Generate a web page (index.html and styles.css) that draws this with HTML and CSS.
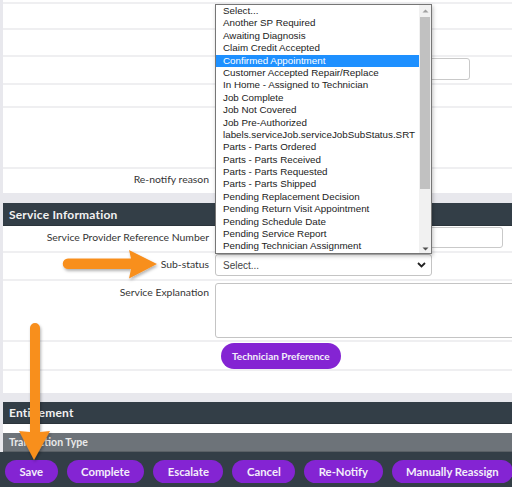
FILE: index.html
```html
<!DOCTYPE html>
<html>
<head>
<meta charset="utf-8">
<link rel="stylesheet" href="styles.css">
</head>
<body>
<div class="page">
  <div class="panel">
    <div class="row h2"></div>
    <div class="row h24"></div>
    <div class="row h25"></div>
    <div class="row h26 form-row">
      <div class="label"></div>
      <div class="field"><div class="text-input top-input"></div></div>
    </div>
    <div class="row h21"></div>
    <div class="row h59"></div>
    <div class="row h24 noline form-row">
      <div class="label renotify">Re-notify reason</div>
      <div class="field"></div>
    </div>
  </div>

  <div class="gap g10"></div>

  <section class="panel">
    <div class="card-header">Service Information</div>
    <div class="row h25 form-row">
      <div class="label">Service Provider Reference Number</div>
      <div class="field"><div class="text-input ref-input"></div></div>
    </div>
    <div class="row h26 form-row">
      <div class="label">Sub-status</div>
      <div class="field">
        <div class="select-box">
          <span>Select...</span>
          <svg class="chev" width="9" height="6" viewBox="0 0 9 6"><path d="M1 1 L4.5 4.5 L8 1" fill="none" stroke="#222" stroke-width="1.8"/></svg>
        </div>
      </div>
    </div>
    <div class="row h59 form-row">
      <div class="label">Service Explanation</div>
      <div class="field"><div class="text-area"></div></div>
    </div>
    <div class="row h27 form-row">
      <div class="label"></div>
      <div class="field"><button class="pill tech">Technician Preference</button></div>
    </div>
    <div class="row h22 noline"></div>
  </section>

  <div class="gap g9"></div>

  <section class="panel">
    <div class="card-header ent">Entitlement</div>
    <div class="white-gap"></div>
    <div class="sub-header">Transaction Type</div>
  </section>

  <div class="action-bar">
    <button class="pill">Save</button>
    <button class="pill">Complete</button>
    <button class="pill">Escalate</button>
    <button class="pill">Cancel</button>
    <button class="pill">Re-Notify</button>
    <button class="pill">Manually Reassign</button>
  </div>

  <div class="dropdown">
    <ul class="options">
      <li>Select...</li>
      <li>Another SP Required</li>
      <li>Awaiting Diagnosis</li>
      <li>Claim Credit Accepted</li>
      <li class="selected">Confirmed Appointment</li>
      <li>Customer Accepted Repair/Replace</li>
      <li>In Home - Assigned to Technician</li>
      <li>Job Complete</li>
      <li>Job Not Covered</li>
      <li>Job Pre-Authorized</li>
      <li>labels.serviceJob.serviceJobSubStatus.SRT</li>
      <li>Parts - Parts Ordered</li>
      <li>Parts - Parts Received</li>
      <li>Parts - Parts Requested</li>
      <li>Parts - Parts Shipped</li>
      <li>Pending Replacement Decision</li>
      <li>Pending Return Visit Appointment</li>
      <li>Pending Schedule Date</li>
      <li>Pending Service Report</li>
      <li>Pending Technician Assignment</li>
    </ul>
    <div class="scrollbar">
      <svg class="sb-arrow" width="11" height="8" viewBox="0 0 11 8"><path d="M2.5 5.5 L5.5 2.5 L8.5 5.5 Z" fill="#a0a0a0"/></svg>
      <div class="sb-track"><div class="sb-thumb"></div></div>
      <svg class="sb-arrow" width="11" height="8" viewBox="0 0 11 8"><path d="M2.5 2.5 L5.5 5.5 L8.5 2.5 Z" fill="#505050"/></svg>
    </div>
  </div>

  <svg class="arrows" width="512" height="487" viewBox="0 0 512 487">
    <defs>
      <filter id="sh" x="-20%" y="-20%" width="140%" height="140%">
        <feDropShadow dx="1" dy="2" stdDeviation="1.5" flood-color="#000" flood-opacity="0.3"/>
      </filter>
    </defs>
    <g fill="#f88f1f" stroke="none" filter="url(#sh)">
      <path d="M68 258.5 L131 258.5 L129 250 L157 264 L129 278.5 L131 269 L68 269 A5.25 5.25 0 0 1 68 258.5 Z"/>
      <path d="M30 328 A5 5 0 0 1 40 328 L40 432 L50 431 L34 460 L19 431 L30 432 Z"/>
    </g>
  </svg>
</div>
</body>
</html>
```
FILE: styles.css
```css
* { box-sizing: border-box; }
html, body { margin: 0; padding: 0; }
body {
  background: #e8e8ed;
  font-family: Lato, "Open Sans", sans-serif;
  color: #3a3a3a;
  width: 512px;
  height: 487px;
  overflow: hidden;
}
.page { position: relative; width: 512px; height: 487px; overflow: hidden; }
.panel { background: #fff; margin-left: 3px; }
.row { border-bottom: 2px solid #efeff1; }
.row.noline { border-bottom: none; }
.h2 { height: 4px; }
.h21 { height: 23px; }
.h22 { height: 22px; }
.h24 { height: 26px; }
.h24.noline { height: 24px; }
.h25 { height: 27px; }
.h26 { height: 28px; }
.h27 { height: 29px; }
.h59 { height: 61px; }
.form-row {
  display: grid;
  grid-template-columns: 206px 1fr;
  column-gap: 6px;
  align-items: start;
}
.label {
  text-align: right;
  font-size: 10.4px;
  line-height: 13px;
  padding-top: 4.5px;
  color: #353535;
  white-space: nowrap;
}
.label.renotify { padding-top: 3.5px; }
.field { min-width: 0; }
.text-input {
  border: 1px solid #c9c9c9;
  border-radius: 3px;
  background: #fff;
  height: 22px;
}
.top-input { width: 255px; margin-top: 1px; }
.ref-input { width: 288px; height: 21px; margin-top: 1px; }
.select-box {
  width: 217px;
  height: 22px;
  margin-top: 1px;
  border: 1px solid #c4c4c4;
  border-radius: 3px;
  display: flex;
  align-items: center;
  justify-content: space-between;
  padding: 0 5px 0 7px;
  font-family: "Liberation Sans", Arial, sans-serif;
  font-size: 10px;
  color: #444;
}
.text-area {
  width: 320px;
  height: 55px;
  margin-top: 2px;
  border: 1px solid #c4c4c4;
  border-radius: 3px;
}
.card-header {
  background: #333e47;
  color: #f2f2f2;
  height: 23px;
  font-size: 12px;
  font-weight: 700;
  letter-spacing: 0.2px;
  padding-left: 6px;
  display: flex;
  align-items: center;
  border-bottom: 1px solid #2b343b;
}
.card-header.ent { height: 22px; }
.white-gap { height: 9px; background: #fff; }
.sub-header {
  background: #6d7379;
  color: #eaeaea;
  height: 19px;
  font-size: 10.5px;
  font-weight: 700;
  padding-left: 6px;
  display: flex;
  align-items: center;
  border-bottom: 1px solid #5a6066;
}
.gap.g10 { height: 10px; }
.gap.g9 { height: 9px; }
.pill {
  background: #8424d3;
  color: #f3eefa;
  border: none;
  border-radius: 13px;
  font-family: Lato, sans-serif;
  font-weight: 700;
  font-size: 11.3px;
  height: 23px;
  padding: 0 14.5px;
  white-space: nowrap;
}
.pill.tech { height: 26px; margin-top: 1px; margin-left: 6px; font-size: 10px; padding: 0 11px; }
.action-bar {
  background: #333e47;
  height: 35px;
  display: flex;
  gap: 9px;
  padding: 8px 0 0 5px;
}
.dropdown {
  position: absolute;
  left: 215px;
  top: 4px;
  width: 217px;
  height: 250px;
  background: #fff;
  border: 1px solid #767676;
  box-shadow: 1px 2px 4px rgba(0,0,0,0.25);
  display: flex;
}
.options {
  list-style: none;
  margin: 0;
  padding: 0;
  flex: 1;
  font-family: "Liberation Sans", Arial, sans-serif;
  font-size: 9.8px;
  color: #222;
}
.options li {
  height: 12.4px;
  line-height: 12.4px;
  padding-left: 7px;
  white-space: nowrap;
  overflow: hidden;
}
.options li.selected { background: #1e90ff; color: #fff; }
.scrollbar {
  width: 12px;
  background: #f1f1f1;
  display: flex;
  flex-direction: column;
}
.sb-arrow { display: block; margin: 2px 0 0 0.5px; }
.sb-track { flex: 1; padding: 0 1px; }
.sb-thumb { height: 172px; background: #c1c1c1; margin-top: 2px; }
.arrows { position: absolute; left: 0; top: 0; pointer-events: none; }
```
